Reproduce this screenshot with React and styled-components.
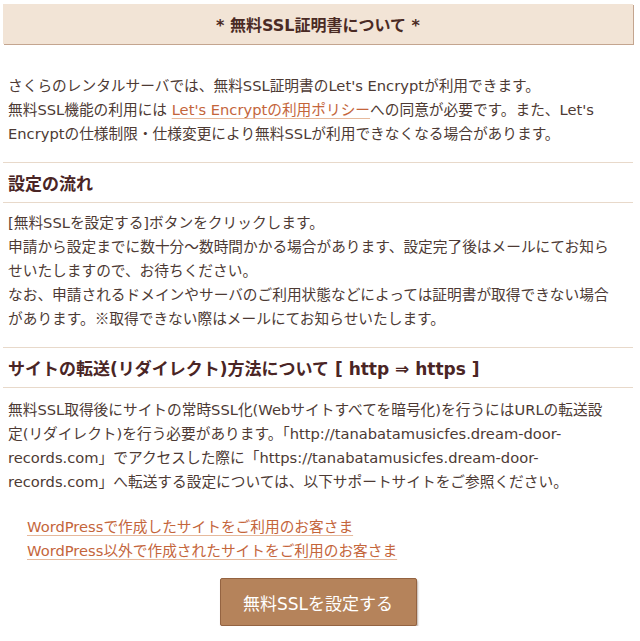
import { createGlobalStyle, styled } from "styled-components";

const GlobalStyle = createGlobalStyle`
  body {
    margin: 0;
    background: #fff;
    font-family: "DejaVu Sans", "Noto Sans CJK JP", sans-serif;
  }
`;

const Page = styled.div`
  width: 630px;
  margin: 4px 0 0 3px;
  color: #4d3a34;
`;

const TitleBox = styled.h2`
  margin: 0;
  height: 40px;
  display: flex;
  align-items: center;
  justify-content: center;
  background: #f2e4d6;
  box-shadow: 1px 1px 0 #c4a58f;
  font-size: 16px;
  font-weight: bold;
  color: #4a2a24;
`;

const Text = styled.p`
  margin: ${(p) => p.$top || 0}px 0 0;
  padding: 0 19px 0 5px;
  font-size: 14.7px;
  line-height: 24px;
`;

const Mark = styled.span`
  font-family: "Noto Sans CJK JP", sans-serif;
  line-height: 1;
`;

const Section = styled.section`
  margin-top: ${(p) => p.$top}px;
`;

const Heading = styled.h3`
  margin: 0;
  height: 39px;
  display: flex;
  align-items: center;
  padding: 0 5px;
  border-top: 1px solid #e8d9ca;
  border-bottom: 1px solid #e8d9ca;
  font-size: 17px;
  font-weight: bold;
  color: #4a2525;
`;

const Link = styled.a`
  color: #c4653b;
  text-decoration: underline;
  text-decoration-color: #e6b99c;
  text-underline-offset: 3px;
`;

const LinkList = styled.ul`
  list-style: none;
  margin: 21px 0 0;
  padding: 0 0 0 24px;
  font-size: 14.7px;
  line-height: 24px;
`;

const ButtonRow = styled.div`
  display: flex;
  justify-content: center;
  margin-top: 15px;
`;

const Button = styled.button`
  width: 197px;
  height: 48px;
  background: #b5835b;
  border: 1px solid #946341;
  border-radius: 2px;
  box-shadow: 1px 2px 2px rgba(60, 30, 10, 0.35);
  color: #fff;
  font-family: inherit;
  font-size: 17px;
  cursor: pointer;
`;

export default function App() {
  return (
    <>
      <GlobalStyle />
      <Page>
        <TitleBox>* 無料SSL証明書について *</TitleBox>
        <Text $top={30}>
          さくらのレンタルサーバでは、無料SSL証明書のLet's Encryptが利用できます。
          <br />
          無料SSL機能の利用には <Link href="#">Let's Encryptの利用ポリシー</Link>
          への同意が必要です。また、Let's Encryptの仕様制限・仕様変更により無料SSLが利用できなくなる場合があります。
        </Text>

        <Section $top={16}>
          <Heading>設定の流れ</Heading>
          <Text $top={8}>
            [無料SSLを設定する]ボタンをクリックします。
            <br />
            申請から設定までに数十分〜数時間かかる場合があります、設定完了後はメールにてお知らせいたしますので、お待ちください。
            <br />
            なお、申請されるドメインやサーバのご利用状態などによっては証明書が取得できない場合があります。<Mark>※</Mark>取得できない際はメールにてお知らせいたします。
          </Text>
        </Section>

        <Section $top={16}>
          <Heading>サイトの転送(リダイレクト)方法について [ http ⇒ https ]</Heading>
          <Text $top={10}>
            無料SSL取得後にサイトの常時SSL化(Webサイトすべてを暗号化)を行うにはURLの転送設定(リダイレクト)を行う必要があります。「http://tanabatamusicfes.dream-door-records.com」でアクセスした際に「https://tanabatamusicfes.dream-door-records.com」へ転送する設定については、以下サポートサイトをご参照ください。
          </Text>
        </Section>

        <LinkList>
          <li>
            <Link href="#">WordPressで作成したサイトをご利用のお客さま</Link>
          </li>
          <li>
            <Link href="#">WordPress以外で作成されたサイトをご利用のお客さま</Link>
          </li>
        </LinkList>

        <ButtonRow>
          <Button>無料SSLを設定する</Button>
        </ButtonRow>
      </Page>
    </>
  );
}
